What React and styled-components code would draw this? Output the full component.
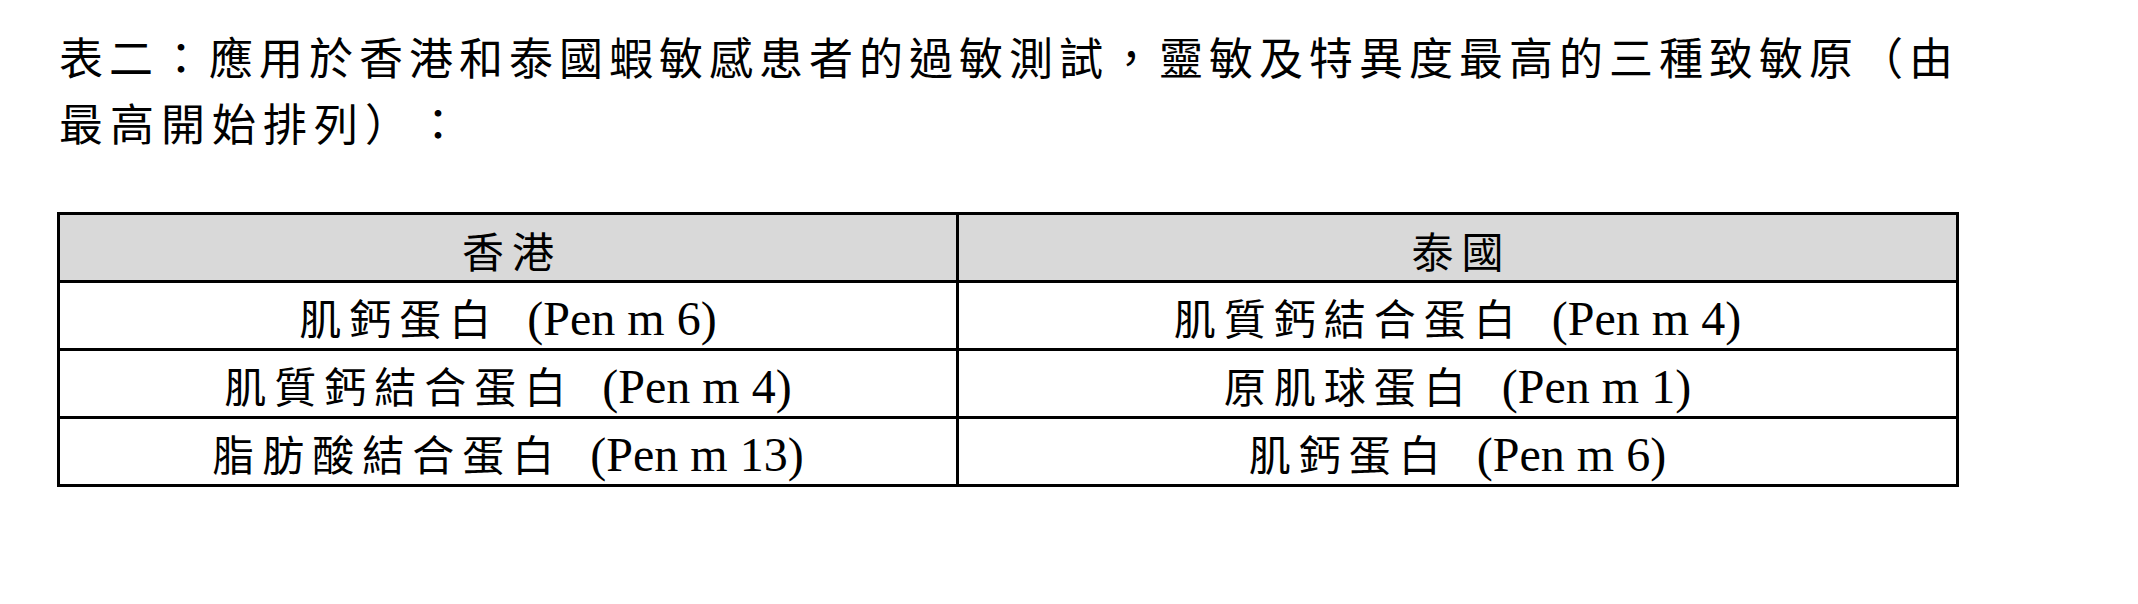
import React from 'react'
import styled, { createGlobalStyle } from 'styled-components'

const GlobalStyle = createGlobalStyle`
  html, body {
    margin: 0;
    padding: 0;
    background: #ffffff;
  }
  body {
    font-family: "Liberation Serif", "Noto Sans CJK TC", serif;
    color: #000000;
  }
`

const rows = [
  { hk: '肌鈣蛋白', hkCode: '(Pen m 6)', th: '肌質鈣結合蛋白', thCode: '(Pen m 4)' },
  { hk: '肌質鈣結合蛋白', hkCode: '(Pen m 4)', th: '原肌球蛋白', thCode: '(Pen m 1)' },
  { hk: '脂肪酸結合蛋白', hkCode: '(Pen m 13)', th: '肌鈣蛋白', thCode: '(Pen m 6)' },
]

export default function App() {
  return (
    <Page>
      <GlobalStyle />
      <Caption>
        <Line>表二：應用於香港和泰國蝦敏感患者的過敏測試，靈敏及特異度最高的三種致敏原（由</Line>
        <Line spacing={7}>最高開始排列）：</Line>
      </Caption>
      <Table>
        <colgroup>
          <Col width={899} />
          <Col width={1000} />
        </colgroup>
        <thead>
          <tr>
            <Head><Zh>香港</Zh></Head>
            <Head><Zh>泰國</Zh></Head>
          </tr>
        </thead>
        <tbody>
          {rows.map((r, i) => (
            <tr key={i}>
              <Cell>
                <Zh>{r.hk}</Zh>
                <Code>{r.hkCode}</Code>
              </Cell>
              <Cell>
                <Zh>{r.th}</Zh>
                <Code>{r.thCode}</Code>
              </Cell>
            </tr>
          ))}
        </tbody>
      </Table>
    </Page>
  )
}

const Page = styled.div`
  width: 2138px;
  height: 604px;
  padding: 23px 0 0 57px;
  box-sizing: border-box;
`

const Caption = styled.div`
  padding-left: 2px;
  margin-bottom: 57px;
`

const Line = styled.div`
  font-family: "Noto Sans CJK TC", sans-serif;
  font-size: 44px;
  letter-spacing: ${p => p.spacing ?? 6}px;
  line-height: 66px;
  white-space: nowrap;
  text-spacing-trim: space-all;
`

const Table = styled.table`
  border-collapse: collapse;
  table-layout: fixed;
  width: 1899px;
  border: 3px solid #000;
`

const Col = styled.col`
  width: ${p => p.width}px;
`

const Head = styled.th`
  background-color: #d9d9d9;
  border: 3px solid #000;
  height: 68px;
  padding: 4px 0 0;
  font-weight: 400;
  text-align: center;
  vertical-align: middle;
  line-height: 1;
  box-sizing: border-box;
`

const Cell = styled.td`
  border: 3px solid #000;
  height: 68px;
  padding: 6px 0 0;
  text-align: center;
  vertical-align: middle;
  line-height: 1;
  white-space: nowrap;
  box-sizing: border-box;
`

const Zh = styled.span`
  font-family: "Noto Sans CJK TC", sans-serif;
  font-size: 42px;
  letter-spacing: 8px;
  margin-right: -8px;
`

const Code = styled.span`
  font-family: "Liberation Serif", serif;
  font-size: 48px;
  margin-left: 36px;
`
